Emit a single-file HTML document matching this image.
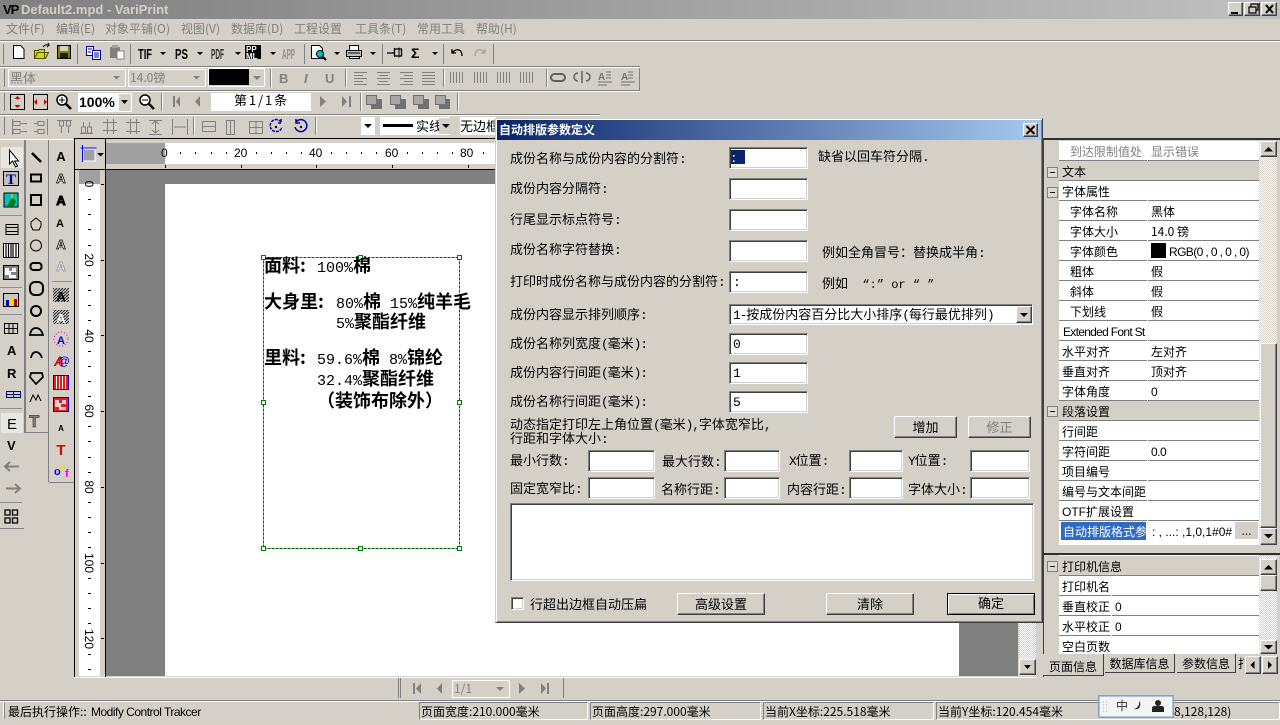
<!DOCTYPE html>
<html lang="zh"><head><meta charset="utf-8"><title>VariPrint</title>
<style>
html,body{margin:0;padding:0;width:1280px;height:725px;overflow:hidden;background:#d4d0c8}
body{position:relative;font:12px/16px "WenQuanYi Zen Hei","Noto Sans CJK SC","Liberation Sans",sans-serif;color:#000}
div,span.t{box-sizing:border-box}
.a{position:absolute}
.t{position:absolute;white-space:pre;line-height:16px}
.menu{color:#808080;top:21px}
.inp{position:absolute;background:#fff;border:1px solid;border-color:#808080 #fff #fff #808080;box-shadow:inset 1px 1px 0 #404040,inset -1px -1px 0 #d4d0c8;font-size:13px;line-height:18px;padding-left:3px}
.btn{position:absolute;background:#d4d0c8;border:1px solid;border-color:#fff #404040 #404040 #fff;box-shadow:inset -1px -1px 0 #808080;text-align:center;font-size:13px}
.dl{font-size:13px}
.m{font:normal 13px/1 "Liberation Mono",monospace;letter-spacing:-1.2px}
.cell{position:absolute;height:20px;border-bottom:1px solid #808080;background:#fff;line-height:20px;padding:1px 0 0 3px;white-space:nowrap;overflow:hidden}
.gcap{background:#d4d0c8}
.l{position:absolute;background:#808080}
.w{position:absolute;background:#fff}
.k{position:absolute;background:#000}
.st{position:absolute;top:702px;height:18px;border:1px solid;border-color:#808080 #fff #fff #808080;line-height:17px;padding-left:1px;white-space:nowrap;overflow:hidden}
.pm{position:absolute;left:1047px;width:11px;height:11px;border:1px solid #808080;background:#dedbd4}
.pm:after{content:"";position:absolute;left:2px;top:4px;width:5px;height:1px;background:#000}
.h{position:absolute;font:bold 18px/20px "Noto Sans CJK SC","WenQuanYi Zen Hei",sans-serif;white-space:pre}
.h i{font:normal 15px/20px "Liberation Mono",monospace}
.sa{font-family:"Liberation Sans",sans-serif;letter-spacing:-.5px}
</style></head><body>

<!-- title bar -->
<div class="a" style="left:0;top:0;width:1280px;height:19px;background:linear-gradient(90deg,#808080,#c0c0c0)"></div>
<span class="t" style="left:3px;top:2px;font:bold 13px/16px 'Liberation Sans',sans-serif;letter-spacing:-1px">VP</span>
<span class="t" style="left:21px;top:2px;color:#d4d0c8;font:bold 13px/16px 'Liberation Sans',sans-serif">Default2.mpd - VariPrint</span>
<div class="btn" style="left:1228px;top:2px;width:15px;height:14px"></div>
<div class="btn" style="left:1244px;top:2px;width:16px;height:14px"></div>
<div class="btn" style="left:1261px;top:2px;width:16px;height:14px"></div>
<svg class="a" style="left:1228px;top:0" width="52" height="18"><path d="M3 12h7v2H3z"/><path d="M21 7h7v6h-7zM23 7V4h7v6h-2" fill="none" stroke="#000" stroke-width="1.2"/><path d="M38 5l7 8M45 5l-7 8" stroke="#000" stroke-width="2"/></svg>

<!-- menu -->
<span class="t menu" style="left:6px">文件(F)</span>
<span class="t menu" style="left:56px">编辑(E)</span>
<span class="t menu" style="left:105px">对象平铺(O)</span>
<span class="t menu" style="left:181px">视图(V)</span>
<span class="t menu" style="left:231px">数据库(D)</span>
<span class="t menu" style="left:294px">工程设置</span>
<span class="t menu" style="left:355px">工具条(T)</span>
<span class="t menu" style="left:417px">常用工具</span>
<span class="t menu" style="left:476px">帮助(H)</span>

<!-- toolbar row lines -->
<div class="l" style="left:0;top:40px;width:1280px;height:1px"></div><div class="w" style="left:0;top:41px;width:1280px;height:1px"></div>
<div class="l" style="left:0;top:66px;width:640px;height:1px"></div><div class="w" style="left:0;top:67px;width:640px;height:1px"></div>
<div class="l" style="left:0;top:90px;width:640px;height:1px"></div><div class="w" style="left:0;top:91px;width:640px;height:1px"></div>
<div class="l" style="left:0;top:114px;width:600px;height:1px"></div><div class="w" style="left:0;top:115px;width:600px;height:1px"></div>

<!-- combos row 2 -->
<div class="a" style="left:8px;top:69px;width:118px;height:18px;border:1px solid #fff"></div>
<span class="t" style="left:10px;top:70px;color:#808080;font-size:13px">黑体</span>
<div class="a" style="left:128px;top:69px;width:78px;height:18px;border:1px solid #fff"></div>
<span class="t" style="left:130px;top:70px;color:#808080">14.0镑</span>
<div class="k" style="left:209px;top:69px;width:40px;height:16px"></div>
<div class="a" style="left:208px;top:68px;width:57px;height:19px;border:1px solid #fff"></div>
<!-- combo row 3 -->
<div class="w" style="left:78px;top:93px;width:54px;height:19px"></div>
<div class="a" style="left:119px;top:94px;width:12px;height:17px;background:#d4d0c8"></div>
<span class="t" style="left:79px;top:94px;font:bold 14px/16px 'Liberation Sans',sans-serif">100%</span>
<div class="w" style="left:211px;top:93px;width:100px;height:18px"></div>
<span class="t" style="left:234px;top:92px;font-size:13px;letter-spacing:-.5px">第 1 / 1 条</span>
<!-- combos row 4 -->
<div class="w" style="left:361px;top:117px;width:14px;height:18px"></div>
<div class="w" style="left:380px;top:117px;width:70px;height:18px"></div>
<div class="k" style="left:383px;top:124px;width:30px;height:3px"></div>
<span class="t" style="left:416px;top:118px;font-size:13px">实线</span>
<div class="a" style="left:439px;top:118px;width:11px;height:16px;background:#d4d0c8"></div>
<div class="w" style="left:460px;top:117px;width:36px;height:18px"></div>
<span class="t" style="left:460px;top:118px;font-size:13px">无边框</span>

<!-- page area -->
<div class="a" style="left:106px;top:143px;width:59px;height:21px;background:#a0a0a0"></div>
<div class="w" style="left:165px;top:143px;width:870px;height:21px"></div>
<div class="k" style="left:74px;top:138px;width:1px;height:539px"></div>
<div class="k" style="left:105px;top:138px;width:1px;height:539px"></div>
<div class="k" style="left:74px;top:138px;width:430px;height:1px"></div>
<div class="w" style="left:0;top:139px;width:73px;height:1px"></div>
<div class="k" style="left:75px;top:169px;width:960px;height:1px"></div>
<div class="a" style="left:106px;top:170px;width:912px;height:506px;background:#808080"></div>
<div class="w" style="left:165px;top:184px;width:794px;height:492px"></div>
<div class="w" style="left:79px;top:184px;width:21px;height:492px"></div>
<div class="a" style="left:79px;top:170px;width:21px;height:14px;background:#a0a0a0"></div>
<div class="a" style="left:1019px;top:170px;width:17px;height:506px;background:repeating-conic-gradient(#fff 0 25%,#d4d0c8 0 50%) 0 0/2px 2px"></div>
<div class="btn" style="left:1019px;top:659px;width:17px;height:16px"></div>
<div class="w" style="left:74px;top:677px;width:962px;height:1px"></div>

<!-- ruler numbers -->
<span class="t" style="left:161px;top:146px;font:12px/14px 'Liberation Sans',sans-serif">0</span>
<span class="t" style="left:234px;top:146px;font:12px/14px 'Liberation Sans',sans-serif">20</span>
<span class="t" style="left:309px;top:146px;font:12px/14px 'Liberation Sans',sans-serif">40</span>
<span class="t" style="left:385px;top:146px;font:12px/14px 'Liberation Sans',sans-serif">60</span>
<span class="t" style="left:460px;top:146px;font:12px/14px 'Liberation Sans',sans-serif">80</span>
<svg class="a" style="left:0;top:0" width="1280" height="725">
<defs><pattern id="hh" width="3" height="3" patternUnits="userSpaceOnUse"><rect width="3" height="3" fill="#c8c8c8"/><path d="M0 3L3 0" stroke="#202020"/></pattern></defs>
<g font-family="Liberation Sans" font-size="12" fill="#000" text-anchor="middle">
<text transform="translate(85 184) rotate(90)">0</text>
<text transform="translate(85 260) rotate(90)">20</text>
<text transform="translate(85 336) rotate(90)">40</text>
<text transform="translate(85 411) rotate(90)">60</text>
<text transform="translate(85 487) rotate(90)">80</text>
<text transform="translate(85 563) rotate(90)">100</text>
<text transform="translate(85 639) rotate(90)">120</text>
</g>
<path d="M88 199.5h3M88 214.5h3M88 229.5h3M88 245.5h3M88 275.5h3M88 290.5h3M88 305.5h3M88 320.5h3M88 351.5h3M88 366.5h3M88 381.5h3M88 396.5h3M88 426.5h3M88 441.5h3M88 457.5h3M88 472.5h3M88 502.5h3M88 517.5h3M88 532.5h3M88 547.5h3M88 578.5h3M88 593.5h3M88 608.5h3M88 623.5h3M88 654.5h3M88 669.5h3
M101 184.5h3M101 260.5h3M101 335.5h3M101 411.5h3M101 487.5h3M101 563.5h3M101 638.5h3
M180.5 152v2M195.5 152v2M211.5 152v2M226.5 152v2M256.5 152v2M271.5 152v2M286.5 152v2M301.5 152v2M331.5 152v2M346.5 152v2M361.5 152v2M376.5 152v2M407.5 152v2M422.5 152v2M437.5 152v2M452.5 152v2M483.5 152v2
M165.5 165v3M241.5 165v3M316.5 165v3M392.5 165v3M468.5 165v3" stroke="#000" fill="none"/>
<!-- corner -->
<rect x="83" y="149" width="12" height="12" fill="#a0a0a0" stroke="#fff"/>
<path d="M80.500 148h16M82.500 145v17" stroke="#00f"/><path d="M97 153h7l-3.500 3.500z"/>
<path d="M1024 665h7l-3.500 4z"/>

<!-- ROW 1 icons -->
<path d="M3.500 44v20M77.500 44v20M130.500 44v20M304.500 44v20M382.500 44v20M443.500 44v20M493.500 44v20" stroke="#808080"/>
<path d="M13.500 45.500h7l3.500 3.500v9.500h-10.500z" fill="#fff" stroke="#000"/>
<path d="M34.500 58.500v-8h4l1-1h5v9zM34.500 58.500l3-6h11l-3 6z" fill="#d8d800" stroke="#505000"/><path d="M43 47q2-3 6-2l-1-2M49 45l-2 2" fill="none" stroke="#000"/>
<rect x="57.500" y="45.500" width="13" height="13" fill="#808000" stroke="#000"/><rect x="60" y="46" width="8" height="5" fill="#d4d0c8"/><rect x="60" y="53" width="8" height="5" fill="#202000"/>
<path d="M86.500 46.500h7v9h-7z" fill="#fff" stroke="#000090"/><path d="M92.500 50.500h8v9h-8z" fill="#fff" stroke="#000090"/><path d="M88 49h4M88 52h3M94 53h5M94 55h5M94 57h5" stroke="#000090"/>
<path d="M110 47h10v11h-10z" fill="#808080"/><rect x="117" y="51" width="7" height="8" fill="#fff" stroke="#808080"/><rect x="112" y="45" width="6" height="3" fill="#a0a0a0"/>
<g font-family="Liberation Sans" font-weight="700" font-size="15">
<text x="138" y="59" textLength="14" lengthAdjust="spacingAndGlyphs">TIF</text>
<text x="175" y="59" textLength="13" lengthAdjust="spacingAndGlyphs">PS</text>
<text x="211" y="59" textLength="13" lengthAdjust="spacingAndGlyphs" fill="#303030">PDF</text>
<text x="282" y="59" textLength="13" lengthAdjust="spacingAndGlyphs" fill="#909090">APP</text>
</g>
<rect x="245" y="45" width="16" height="14" fill="#000"/>
<g font-family="Liberation Sans" font-weight="700" font-size="8"><text x="246" y="52" fill="#fff">PP</text><text x="246" y="59" fill="#fff">ML</text></g>
<path d="M160 52h6l-3 3zM197 52h6l-3 3zM235 52h6l-3 3zM270 52h6l-3 3zM334 52h6l-3 3zM370 52h6l-3 3zM432 52h6l-3 3z"/>
<path d="M311.500 45.500h8l3 3v10h-11z" fill="#fff" stroke="#000"/><circle cx="320" cy="54" r="3.500" fill="#00c0c0" stroke="#000"/><path d="M323 57l3 3" stroke="#000" stroke-width="2"/>
<path d="M349.500 45.500h9v5h-9z" fill="#fff" stroke="#000"/><path d="M346.500 50.500h15v6h-15z" fill="#c0c0c0" stroke="#000"/><path d="M349.500 56.500h10v2h-10z" fill="#fff" stroke="#000"/><path d="M348 53h12" stroke="#000"/>
<path d="M387 53h7M394.500 48v9M394.500 49h7v7h-7" fill="none" stroke="#000" stroke-width="1.300"/><path d="M399 47.500v10" stroke="#000"/>
<text x="411" y="58" font-family="Liberation Sans" font-weight="700" font-size="14">Σ</text>
<path d="M452 49v4h4M452 53q3-4 7-3q3 1 3 6" fill="none" stroke="#000" stroke-width="1.300"/>
<path d="M485 49v4h-4M485 53q-3-4-7-3q-3 1-3 6" fill="none" stroke="#a0a0a0" stroke-width="1.300"/>

<!-- ROW 2 -->
<path d="M4.500 69v18M270.500 69v18M345.500 69v18M443.500 69v18M546.500 69v18M639.500 68v22" stroke="#808080"/><path d="M271.500 69v18M346.500 69v18M444.500 69v18M547.500 69v18" stroke="#fff"/>
<path d="M113 76h7l-3.500 3.500zM193 76h7l-3.500 3.500zM253 76h8l-4 4z" fill="#808080"/>
<g font-family="Liberation Sans" font-weight="700" font-size="13" fill="#808080"><text x="279" y="83">B</text><text x="304" y="83" font-style="italic">I</text><text x="325" y="83">U</text></g>
<path d="M354 72.500h13M354 75.500h9M354 78.500h13M354 81.500h9M354 84.500h13M377 72.500h13M379 75.500h9M377 78.500h13M379 81.500h9M377 84.500h13M400 72.500h13M404 75.500h9M400 78.500h13M404 81.500h9M400 84.500h13M422 72.500h13M422 75.500h13M422 78.500h13M422 81.500h13M422 84.500h13" stroke="#808080"/>
<path d="M450.500 72v11M453.500 72v11M456.500 72v11M459.500 72v11M462.500 72v11M474.500 72v11M477.500 72v11M480.500 72v11M483.500 72v11M486.500 72v11M497.500 72v11M500.500 72v11M503.500 72v11M506.500 72v11M509.500 72v11M520.500 72v11M523.500 72v11M526.500 72v11M529.500 72v11M532.500 72v11" stroke="#808080"/>
<rect x="551" y="74" width="14" height="7" rx="3.500" fill="none" stroke="#606060" stroke-width="2"/>
<path d="M578 73a4 4 0 0 0 0 8M586 73a4 4 0 0 1 0 8M582 71v12" fill="none" stroke="#606060" stroke-width="1.500"/>
<g font-family="Liberation Sans" font-weight="700" font-size="10" fill="#707070"><text x="598" y="80">A</text><text x="621" y="80">A</text></g>
<path d="M606 72h5M606 75h5M606 78h5M598 82h14M598 85h9M621 82h14M621 85h9M628 72h5M628 75h5M628 78h5" stroke="#707070"/>

<!-- ROW 3 -->
<path d="M4.500 93v18M161.500 93v18M360.500 93v18M457.500 93v18" stroke="#808080"/><path d="M162.500 93v18M361.500 93v18M458.500 93v18" stroke="#fff"/>
<rect x="10.500" y="94.500" width="14" height="15" fill="none" stroke="#000"/><path d="M17.500 96l-3 3h6zM17.500 108l-3-3h6z" fill="#c00000"/>
<rect x="33.500" y="94.500" width="14" height="15" fill="none" stroke="#000"/><path d="M34 102l3-3v6zM47 102l-3-3v6z" fill="#c00000"/>
<circle cx="62" cy="100" r="5" fill="#fff" stroke="#000" stroke-width="1.500"/><path d="M66 104l5 5" stroke="#000" stroke-width="2.500"/><path d="M59 100h6M62 97v6" stroke="#000"/>
<path d="M121 100h7l-3.500 4z"/>
<circle cx="145" cy="100" r="5" fill="#fff" stroke="#000" stroke-width="1.500"/><path d="M149 104l5 5" stroke="#000" stroke-width="2.500"/><path d="M142 100h6" stroke="#000"/>
<path d="M173 96h2v11h-2zM180 96v11l-4-5.500zM200 96v11l-5-5.500zM320 96l6 5.500-6 5.500zM342 96l5 5.500-5 5.500zM349 96h2v11h-2z" fill="#808080"/>
<g fill="#707070"><rect x="371" y="99" width="11" height="10"/><rect x="395" y="99" width="11" height="10"/><rect x="418" y="99" width="11" height="10"/><rect x="439" y="99" width="11" height="10"/></g>
<g fill="#a8a8a8" stroke="#707070"><rect x="366.500" y="95.500" width="10" height="9"/><rect x="390.500" y="95.500" width="10" height="9"/><rect x="413.500" y="95.500" width="10" height="9"/><rect x="435.500" y="95.500" width="10" height="9"/></g>

<!-- ROW 4 -->
<path d="M4.500 117v18M193.500 117v18M315.500 117v18" stroke="#808080"/><path d="M194.500 117v18M316.500 117v18" stroke="#fff"/>
<path d="M12.500 119v16M13 121.500h7v4h-7zM13 129.500h7v4h-7zM21 123.500h6M21 131.500h6M34 123.500h4M38 121.500h6v4h-6zM38 129.500h6v4h-6zM34 131.500h4M47.500 119v16M57 120.500h15M59.500 121v5h4v-5zM66.500 121v5h4v-5zM61.500 126v7M68.500 126v7M80 133.500h13M83.500 122v5h-2v6h4v-6h-2zM89.500 122v5h-2v6h4v-6h-2zM103 122.500h14M103 130.500h14M107.500 119v15M113.500 119v15M126 122.500h14M126 131.500h14M130.500 119v15M136.500 119v15M149 120.500h13M149 134.500h13M155.500 121v12M152 124l3.500-3 3.500 3M152 130l3.500 3 3.500-3M172.500 119v16M187.500 119v16M174 127h12" fill="none" stroke="#808080"/>
<rect x="202.500" y="121.500" width="13" height="10" fill="none" stroke="#808080"/><path d="M203 126.500h12" stroke="#808080"/>
<rect x="226.500" y="120.500" width="8" height="14" fill="none" stroke="#808080"/><path d="M230.500 120v14" stroke="#808080"/>
<rect x="249.500" y="121.500" width="13" height="12" fill="none" stroke="#808080"/><path d="M249 127.500h14M256 121v13" stroke="#808080"/>
<path d="M281 122a6 6 0 1 0 1 5M281 119v4h-4" fill="none" stroke="#0000a0" stroke-width="1.500" stroke-dasharray="3 1"/><circle cx="276" cy="127" r="1.200" fill="#000"/>
<path d="M296 122a6 6 0 1 1-1 5M296 119v4h4" fill="none" stroke="#0000a0" stroke-width="1.500"/><circle cx="301" cy="127" r="1.200" fill="#000"/>
<path d="M364 124h8l-4 4zM442 124h8l-4 4z"/>

<!-- LEFT PANELS -->
<path d="M24.500 140v292M25.500 140v292M48.500 140v342M0 528.500h24M24 432.500h25M49 482.500h25" stroke="#808080"/>
<path d="M0 215.500h22M0 287.500h22M0 314.500h22M0 408.500h22M0 502.500h22M52 281.500h20" stroke="#909090"/>
<rect x="1" y="147" width="22" height="21" fill="#e8e6e0"/><path d="M9.500 150v14l3-3 3 6 2-1-3-5h4z" fill="#fff" stroke="#000"/>
<rect x="3.500" y="171.500" width="15" height="14" fill="#c0c0c0" stroke="#000"/><text x="6" y="184" font-family="Liberation Serif" font-weight="700" font-size="15" fill="#000080">T</text>
<rect x="4" y="193" width="14" height="14" fill="#00c0c0" stroke="#000"/><path d="M7 206l3-6 3-2 3 3-2 5z" fill="#008000"/><path d="M11 198v-4h2v4" fill="#c0c000"/>
<path d="M6 224.500h12v10H6zM6 227.500h12M6 231.500h12" fill="none" stroke="#000"/>
<rect x="3.500" y="243.500" width="15" height="14" fill="#fff" stroke="#000"/><path d="M6 244v13M8.500 244v13M11 244v13M13 244v13M16 244v13" stroke="#000" stroke-width="1.200"/>
<rect x="3.500" y="265.500" width="15" height="14" fill="#808080" stroke="#000"/><path d="M5 268h4v3h3v-3h4v4h-5v3h5v3H9v-3H5zM12 269h2" fill="#fff"/>
<rect x="3.500" y="293.500" width="15" height="13" fill="#c8c8c8" stroke="#000"/><rect x="6" y="300" width="3" height="6" fill="#0000e0"/><rect x="10" y="297" width="3" height="9" fill="#e8e000"/><rect x="14" y="299" width="3" height="7" fill="#c00000"/>
<path d="M4.500 323.500h13v10h-13zM4.500 328.500h13M9 323v11M13 323v11" fill="none" stroke="#000"/>
<rect x="1" y="413" width="22" height="20" fill="#e8e6e0"/>
<g font-family="Liberation Sans" font-weight="700" font-size="13" fill="#000">
<text x="7" y="355">A</text><text x="7" y="378">R</text><text x="7" y="429" font-weight="400" font-size="15">E</text><text x="7" y="450">V</text>
</g>
<path d="M6.500 391.500h14v6h-14zM6 394.500h14M13.500 391v6" fill="none" stroke="#000090"/>
<path d="M19 466.500H6M10 462l-5 4.500 5 4.500M6 488.500h13M15 484l5 4.500-5 4.500" fill="none" stroke="#808080" stroke-width="2"/>
<path d="M5 510h5v5H5zM12.500 510h5v5h-5zM5 518h5v5H5zM12.500 518h5v5h-5z" fill="none" stroke="#000" stroke-width="1.300"/>
<!-- panel 2 -->
<path d="M32 153l9 9" stroke="#000" stroke-width="2.500"/>
<rect x="31" y="174.500" width="10" height="7" fill="none" stroke="#000" stroke-width="2"/>
<rect x="31" y="195" width="10" height="10" fill="none" stroke="#000" stroke-width="2"/>
<path d="M36 218l5 4v4l-2 4h-6l-2-4v-4z" fill="none" stroke="#000"/>
<circle cx="36" cy="245.500" r="5.500" fill="none" stroke="#000"/>
<rect x="30.500" y="263" width="11" height="7" rx="3" fill="none" stroke="#000" stroke-width="2"/>
<rect x="30" y="282" width="13" height="13" rx="5" fill="none" stroke="#000" stroke-width="2"/>
<circle cx="36" cy="311" r="5" fill="none" stroke="#000" stroke-width="2"/>
<path d="M30 335q1-7 6-7t7 7z" fill="none" stroke="#000" stroke-width="1.700"/>
<path d="M31 358q1-6 5-6t6 6" fill="none" stroke="#000" stroke-width="1.700"/>
<path d="M31 373h11l1 4-7 7-6-7z" fill="none" stroke="#000" stroke-width="1.700"/>
<path d="M30 402l3-7 3 5 2-5 3 6" fill="none" stroke="#000"/>
<text x="29" y="427" font-family="Liberation Sans" font-weight="700" font-size="17" fill="#808080" stroke="#000" stroke-width=".4">T</text>
<!-- panel 3 -->
<g font-family="Liberation Sans" font-weight="700" font-size="13" text-anchor="middle">
<text x="61" y="161">A</text>
<text x="61" y="183" fill="#fff" stroke="#000" stroke-width=".8">A</text>
<text x="61" y="205" fill="#000" stroke="#000" stroke-width="1">A</text>
<text x="60" y="227" font-size="11">A</text>
<text x="61" y="249" fill="#fff" stroke="#000" stroke-width=".8">A</text>
<text x="61" y="271" fill="#fff" stroke="#909090" stroke-width=".8">A</text>
</g>
<rect x="53" y="288" width="16" height="14" fill="url(#hh)"/>
<text x="61" y="301" text-anchor="middle" font-family="Liberation Sans" font-weight="700" font-size="13">A</text>
<rect x="53" y="310" width="16" height="14" fill="url(#hh)"/>
<text x="61" y="323" text-anchor="middle" font-family="Liberation Sans" font-weight="700" font-size="13" fill="#fff">A</text>
<circle cx="61" cy="339" r="7" fill="none" stroke="#d000d0" stroke-dasharray="1 2"/><text x="61" y="344" text-anchor="middle" font-family="Liberation Sans" font-weight="700" font-size="11" fill="#0000c0">A</text>
<text x="59" y="366" text-anchor="middle" font-family="Liberation Sans" font-weight="700" font-size="14" fill="#e00000" font-style="italic">A</text><text x="64" y="365" text-anchor="middle" font-family="Liberation Sans" font-size="12" fill="#0000e0">@</text>
<rect x="53.500" y="375.500" width="15" height="14" fill="#e02020" stroke="#0000e0"/><path d="M56.500 376v13M59.500 376v13M62.500 376v13M65.500 376v13" stroke="#fff"/>
<rect x="53.500" y="397.500" width="15" height="14" fill="#e02020" stroke="#0000e0"/><path d="M55 400h4v3h3v-3h4v4h-5v3h5v3h-7v-3h-4z" fill="#ffd0d0"/>
<text x="61" y="431" text-anchor="middle" font-family="Liberation Sans" font-weight="700" font-size="8">A</text>
<text x="61" y="455" text-anchor="middle" font-family="Liberation Sans" font-weight="700" font-size="15" fill="#e00000">T</text>
<g font-family="Liberation Sans" font-weight="700"><text x="54" y="475" font-size="11" fill="#0000e0">o</text><text x="61" y="472" font-size="10" fill="#e8e800">t</text><text x="65" y="477" font-size="11" fill="#f000f0">f</text></g>

<!-- selection box -->
<rect x="263.500" y="257.500" width="196" height="291" fill="none" stroke="#006000" stroke-dasharray="3 1"/>
<g fill="#fff" stroke="#008000"><rect x="261.500" y="255.500" width="4" height="4"/><rect x="358.500" y="255.500" width="4" height="4"/><rect x="457.500" y="255.500" width="4" height="4"/><rect x="261.500" y="400.500" width="4" height="4"/><rect x="457.500" y="400.500" width="4" height="4"/><rect x="261.500" y="546.500" width="4" height="4"/><rect x="358.500" y="546.500" width="4" height="4"/><rect x="457.500" y="546.500" width="4" height="4"/></g>

<!-- bottom nav -->
<path d="M398.500 678v20M400.500 678v20M563.500 678v20" stroke="#808080"/>
<path d="M413 683h2v11h-2zM421 683v11l-5-5.500zM442 683v11l-5-5.500zM519 683l6 5.500-6 5.500zM541 683l5 5.500-5 5.500zM547 683h2v11h-2z" fill="#808080"/>
<rect x="452.500" y="680.500" width="57" height="17" fill="none" stroke="#fff"/>
<path d="M496 687h8l-4 4z" fill="#808080"/>
</svg>
<span class="t" style="left:454px;top:681px;color:#808080">1/1</span>

<!-- page text -->
<div class="h" style="left:264px;top:255px">面料:</div>
<div class="h" style="left:317px;top:255px"><i>100%</i>棉</div>
<div class="h" style="left:264px;top:291px">大身里:</div>
<div class="h" style="left:336px;top:291px"><i>80%</i>棉<i> 15%</i>纯羊毛</div>
<div class="h" style="left:336px;top:311px"><i>5%</i>聚酯纤维</div>
<div class="h" style="left:264px;top:347px">里料:</div>
<div class="h" style="left:317px;top:347px"><i>59.6%</i>棉<i> 8%</i>锦纶</div>
<div class="h" style="left:317px;top:368px"><i>32.4%</i>聚酯纤维</div>
<div class="h" style="left:317px;top:390px">（装饰布除外）</div>

<!-- right property grid -->
<div class="k" style="left:1043px;top:138px;width:237px;height:2px;background:#303030"></div>
<div class="l" style="left:1043px;top:138px;width:1px;height:539px;background:#404040"></div>
<div class="a" style="left:1044px;top:140px;width:15px;height:405px;background:#d4d0c8"></div>
<div class="a" style="left:1059px;top:141px;width:200px;height:404px;background:#fff"></div>

<div class="cell" style="left:1059px;top:141px;width:88px;padding-left:11px;color:#808080">到达限制值处</div><div class="cell" style="left:1148px;top:141px;width:111px;color:#808080">显示错误</div>
<div class="cell gcap" style="left:1059px;top:161px;width:200px">文本</div>
<div class="cell" style="left:1059px;top:181px;width:88px">字体属性</div><div class="cell" style="left:1148px;top:181px;width:111px"></div>
<div class="cell" style="left:1059px;top:201px;width:88px;padding-left:11px">字体名称</div><div class="cell" style="left:1148px;top:201px;width:111px">黑体</div>
<div class="cell" style="left:1059px;top:221px;width:88px;padding-left:11px">字体大小</div><div class="cell" style="left:1148px;top:221px;width:111px">14.0 镑</div>
<div class="cell" style="left:1059px;top:241px;width:88px;padding-left:11px">字体颜色</div><div class="cell sa" style="left:1148px;top:241px;width:111px;padding-left:21px;letter-spacing:-.6px">RGB(0 , 0 , 0 , 0)</div>
<div class="k" style="left:1151px;top:243px;width:15px;height:15px"></div>
<div class="cell" style="left:1059px;top:261px;width:88px;padding-left:11px">粗体</div><div class="cell" style="left:1148px;top:261px;width:111px">假</div>
<div class="cell" style="left:1059px;top:281px;width:88px;padding-left:11px">斜体</div><div class="cell" style="left:1148px;top:281px;width:111px">假</div>
<div class="cell" style="left:1059px;top:301px;width:88px;padding-left:11px">下划线</div><div class="cell" style="left:1148px;top:301px;width:111px">假</div>
<div class="cell sa" style="left:1059px;top:321px;width:88px;padding-left:4px;letter-spacing:-.7px">Extended Font St</div><div class="cell" style="left:1148px;top:321px;width:111px"></div>
<div class="cell" style="left:1059px;top:341px;width:88px">水平对齐</div><div class="cell" style="left:1148px;top:341px;width:111px">左对齐</div>
<div class="cell" style="left:1059px;top:361px;width:88px">垂直对齐</div><div class="cell" style="left:1148px;top:361px;width:111px">顶对齐</div>
<div class="cell" style="left:1059px;top:381px;width:88px">字体角度</div><div class="cell sa" style="left:1148px;top:381px;width:111px">0</div>
<div class="cell gcap" style="left:1059px;top:401px;width:200px">段落设置</div>
<div class="cell" style="left:1059px;top:421px;width:88px">行间距</div><div class="cell" style="left:1148px;top:421px;width:111px"></div>
<div class="cell" style="left:1059px;top:441px;width:88px">字符间距</div><div class="cell sa" style="left:1148px;top:441px;width:111px">0.0</div>
<div class="cell" style="left:1059px;top:461px;width:88px">项目编号</div><div class="cell" style="left:1148px;top:461px;width:111px"></div>
<div class="cell" style="left:1059px;top:481px;width:88px">编号与文本间距</div><div class="cell" style="left:1148px;top:481px;width:111px"></div>
<div class="cell" style="left:1059px;top:501px;width:88px"><span style="font-family:'Liberation Sans',sans-serif">OTF</span>扩展设置</div><div class="cell" style="left:1148px;top:501px;width:111px"></div>
<div class="cell" style="left:1059px;top:521px;width:88px;padding-left:2px;border-bottom:1px solid #fff"><span class="a" style="left:2px;top:1px;width:85px;height:18px;background:#316ac5"></span><span class="a" style="left:4px;top:1px;color:#fff;line-height:20px">自动排版格式参</span></div>
<div class="cell" style="left:1148px;top:521px;width:111px;font-family:'Liberation Sans',sans-serif;border-bottom:1px solid #fff;padding-left:4px">:  , ...:  ,1,0,1#0#</div>
<div class="a" style="left:1235px;top:522px;width:23px;height:17px;background:#d4d0c8;text-align:center;line-height:17px;color:#333">...</div>
<div class="pm" style="top:167px"></div><div class="pm" style="top:187px"></div><div class="pm" style="top:406px"></div>
<!-- scrollbar 1 -->
<div class="a" style="left:1259px;top:141px;width:18px;height:404px;background:repeating-conic-gradient(#fff 0 25%,#d4d0c8 0 50%) 0 0/2px 2px"></div>
<div class="btn" style="left:1260px;top:141px;width:17px;height:16px"></div>
<div class="btn" style="left:1260px;top:343px;width:17px;height:185px"></div>
<div class="btn" style="left:1260px;top:528px;width:17px;height:17px"></div>

<div class="k" style="left:1043px;top:553px;width:237px;height:2px;background:#303030"></div>
<div class="a" style="left:1044px;top:555px;width:15px;height:100px"></div>
<div class="a" style="left:1059px;top:555px;width:200px;height:100px;background:#fff"></div>
<div class="cell gcap" style="left:1059px;top:556px;width:200px">打印机信息</div>
<div class="cell" style="left:1059px;top:576px;width:52px;padding-left:3px;overflow:hidden">打印机名</div><div class="cell" style="left:1112px;top:576px;width:147px"></div>
<div class="cell" style="left:1059px;top:596px;width:52px;overflow:hidden">垂直校正</div><div class="cell sa" style="left:1112px;top:596px;width:147px">0</div>
<div class="cell" style="left:1059px;top:616px;width:52px;overflow:hidden">水平校正</div><div class="cell sa" style="left:1112px;top:616px;width:147px">0</div>
<div class="cell" style="left:1059px;top:636px;width:52px;overflow:hidden;border:0">空白页数</div><div class="cell" style="left:1112px;top:636px;width:147px;border:0"></div>
<div class="pm" style="top:561px"></div>
<div class="a" style="left:1259px;top:556px;width:18px;height:98px;background:repeating-conic-gradient(#fff 0 25%,#d4d0c8 0 50%) 0 0/2px 2px"></div>
<div class="btn" style="left:1260px;top:559px;width:17px;height:16px"></div>
<div class="btn" style="left:1260px;top:575px;width:17px;height:16px"></div>
<div class="btn" style="left:1260px;top:640px;width:17px;height:14px"></div>

<!-- tabs -->
<div class="a" style="left:1044px;top:654px;width:236px;height:23px;background:#d4d0c8"></div>
<div class="a" style="left:1043px;top:654px;width:61px;height:22px;background:#d4d0c8;border-right:1px solid #404040;border-bottom:1px solid #404040;text-align:center;line-height:25px">页面信息</div>
<div class="a" style="left:1105px;top:654px;width:70px;height:19px;border-right:1px solid #404040;border-bottom:1px solid #404040;text-align:center;line-height:20px">数据库信息</div>
<div class="a" style="left:1177px;top:654px;width:59px;height:19px;border-right:1px solid #404040;border-bottom:1px solid #404040;text-align:center;line-height:20px">参数信息</div>
<div class="a" style="left:1238px;top:654px;width:6px;height:19px;overflow:hidden;line-height:20px">打</div>
<div class="btn" style="left:1245px;top:656px;width:16px;height:18px"></div>
<div class="btn" style="left:1262px;top:656px;width:16px;height:18px"></div>
<svg class="a" style="left:1240px;top:135px" width="40" height="545">
<path d="M28.500 12l-4.500 4.500h9zM24 399h9l-4.500 4.500zM28.500 430l-4.500 4.500h9zM24 510h9l-4.500 4.500zM14.500 526v8l-4-4zM28 526l4 4-4 4z"/>
</svg>

<!-- status bar -->
<div class="l" style="left:0;top:700px;width:1280px;height:1px"></div>
<div class="w" style="left:0;top:701px;width:1280px;height:1px"></div>
<div class="a" style="left:3px;top:703px;width:2px;height:16px;border-left:1px solid #fff;border-right:1px solid #808080"></div>
<span class="t" style="left:8px;top:704px">最后执行操作::</span>
<span class="t sa" style="left:91px;top:704px">Modify Control Trakcer</span>
<div class="st" style="left:419px;width:169px">页面宽度:210.000毫米</div>
<div class="st" style="left:590px;width:171px">页面高度:297.000毫米</div>
<div class="st" style="left:763px;width:171px">当前X坐标:225.518毫米</div>
<div class="st" style="left:936px;width:344px">当前Y坐标:120.454毫米</div>
<span class="t" style="left:1174px;top:704px">8,128,128)</span>

<!-- IME -->
<div class="a" style="left:1098px;top:695px;width:76px;height:23px;background:#f4f4f2;border:1px solid #7da2ce;box-shadow:inset 0 0 0 1px #a8c4e8"></div>
<span class="t" style="left:1116px;top:698px;color:#333;font-size:12px">中</span>
<svg class="a" style="left:1098px;top:695px" width="76" height="23"><path d="M5 7h1M8 7h1M5 10h1M8 10h1M5 13h1M8 13h1M5 16h1M8 16h1" stroke="#a0b8d0"/><path d="M41 6q1 6-5 8q5 1 6-3q1-3-1-5z" fill="#222"/><circle cx="60" cy="8" r="3" fill="#222"/><path d="M54 17v-4q0-2 3-2h6q3 0 3 2v4z" fill="#222"/></svg>

<!-- DIALOG -->
<div class="a" style="left:495px;top:118px;width:548px;height:505px;background:#d4d0c8;border:1px solid;border-color:#d4d0c8 #404040 #404040 #d4d0c8;box-shadow:inset 1px 1px 0 #fff,inset -1px -1px 0 #808080"></div>
<div class="a" style="left:497px;top:120px;width:544px;height:20px;background:linear-gradient(90deg,#0a246a,#a6caf0)"></div>
<span class="t" style="left:499px;top:122px;color:#fff;font-weight:700;font-size:12px">自动排版参数定义</span>
<div class="btn" style="left:1023px;top:123px;width:15px;height:14px"></div>
<svg class="a" style="left:1023px;top:123px" width="15" height="14"><path d="M3.500 3l8 8M11.500 3l-8 8" stroke="#000" stroke-width="2"/></svg>

<span class="t dl" style="left:510px;top:150px">成份名称与成份内容的分割符<i class="m">:</i></span>
<span class="t dl" style="left:510px;top:180px">成份内容分隔符<i class="m">:</i></span>
<span class="t dl" style="left:510px;top:211px">行尾显示标点符号<i class="m">:</i></span>
<span class="t dl" style="left:510px;top:241px">成份名称字符替换<i class="m">:</i></span>
<span class="t dl" style="left:510px;top:273px">打印时成份名称与成份内容的分割符<i class="m">:</i></span>
<span class="t dl" style="left:510px;top:306px">成份内容显示排列顺序<i class="m">:</i></span>
<span class="t dl" style="left:510px;top:335px">成份名称列宽度<i class="m">(</i>毫米<i class="m">):</i></span>
<span class="t dl" style="left:510px;top:364px">成份内容行间距<i class="m">(</i>毫米<i class="m">):</i></span>
<span class="t dl" style="left:510px;top:393px">成份名称行间距<i class="m">(</i>毫米<i class="m">):</i></span>
<span class="t dl" style="left:818px;top:148px">缺省以回车符分隔<i class="m">.</i></span>
<span class="t dl" style="left:822px;top:244px">例如全角冒号：替换成半角<i class="m">:</i></span>
<span class="t dl" style="left:822px;top:275px">例如<i class="m" style="font-size:12px;letter-spacing:0">  “:” or “ ”</i></span>

<div class="inp" style="left:729px;top:147px;width:79px;height:22px"></div>
<div class="a" style="left:731px;top:150px;width:14px;height:14px;background:#0a246a;color:#fff;font-size:13px;line-height:14px;padding-left:1px">:</div>
<div class="inp" style="left:729px;top:178px;width:79px;height:22px"></div>
<div class="inp" style="left:729px;top:209px;width:79px;height:22px"></div>
<div class="inp" style="left:729px;top:240px;width:79px;height:22px"></div>
<div class="inp" style="left:729px;top:271px;width:79px;height:22px"><i class="m">:</i></div>
<div class="inp" style="left:729px;top:304px;width:304px;height:21px;line-height:17px"><i class="m">1-</i>按成份内容百分比大小排序<i class="m">(</i>每行最优排列<i class="m">)</i></div>
<div class="btn" style="left:1016px;top:306px;width:16px;height:17px"></div>
<svg class="a" style="left:1016px;top:306px" width="16" height="17"><path d="M4 7h8l-4 4z"/></svg>
<div class="inp" style="left:729px;top:333px;width:79px;height:22px"><i class="m">0</i></div>
<div class="inp" style="left:729px;top:362px;width:79px;height:22px"><i class="m">1</i></div>
<div class="inp" style="left:729px;top:391px;width:79px;height:22px"><i class="m">5</i></div>

<span class="t dl" style="left:510px;top:418px;line-height:12px">动态指定打印左上角位置<i class="m">(</i>毫米<i class="m">),</i>字体宽窄比<i class="m">,</i>
行距和字体大小<i class="m">:</i></span>
<div class="btn" style="left:894px;top:416px;width:63px;height:22px;line-height:19px">增加</div>
<div class="btn" style="left:968px;top:416px;width:63px;height:22px;line-height:19px;color:#808080">修正</div>

<span class="t dl" style="left:510px;top:452px">最小行数<i class="m">:</i></span>
<span class="t dl" style="left:662px;top:453px">最大行数<i class="m">:</i></span>
<span class="t dl" style="left:789px;top:452px"><i class="m">X</i>位置<i class="m">:</i></span>
<span class="t dl" style="left:908px;top:452px"><i class="m">Y</i>位置<i class="m">:</i></span>
<span class="t dl" style="left:510px;top:480px">固定宽窄比<i class="m">:</i></span>
<span class="t dl" style="left:661px;top:481px">名称行距<i class="m">:</i></span>
<span class="t dl" style="left:787px;top:481px">内容行距<i class="m">:</i></span>
<span class="t dl" style="left:908px;top:481px">字体大小<i class="m">:</i></span>
<div class="inp" style="left:588px;top:450px;width:67px;height:22px"></div>
<div class="inp" style="left:724px;top:450px;width:56px;height:22px"></div>
<div class="inp" style="left:849px;top:450px;width:54px;height:22px"></div>
<div class="inp" style="left:970px;top:450px;width:60px;height:22px"></div>
<div class="inp" style="left:588px;top:477px;width:67px;height:22px"></div>
<div class="inp" style="left:724px;top:477px;width:56px;height:22px"></div>
<div class="inp" style="left:849px;top:477px;width:54px;height:22px"></div>
<div class="inp" style="left:970px;top:477px;width:60px;height:22px"></div>
<div class="inp" style="left:510px;top:503px;width:524px;height:78px"></div>

<div class="inp" style="left:511px;top:597px;width:13px;height:13px"></div>
<span class="t dl" style="left:530px;top:596px">行超出边框自动压扁</span>
<div class="btn" style="left:677px;top:593px;width:88px;height:22px;line-height:19px">高级设置</div>
<div class="btn" style="left:826px;top:593px;width:88px;height:22px;line-height:19px">清除</div>
<div class="btn" style="left:947px;top:593px;width:88px;height:22px;line-height:18px;border:1px solid #000;box-shadow:inset 1px 1px 0 #fff,inset -1px -1px 0 #808080">确定</div>
</body></html>
